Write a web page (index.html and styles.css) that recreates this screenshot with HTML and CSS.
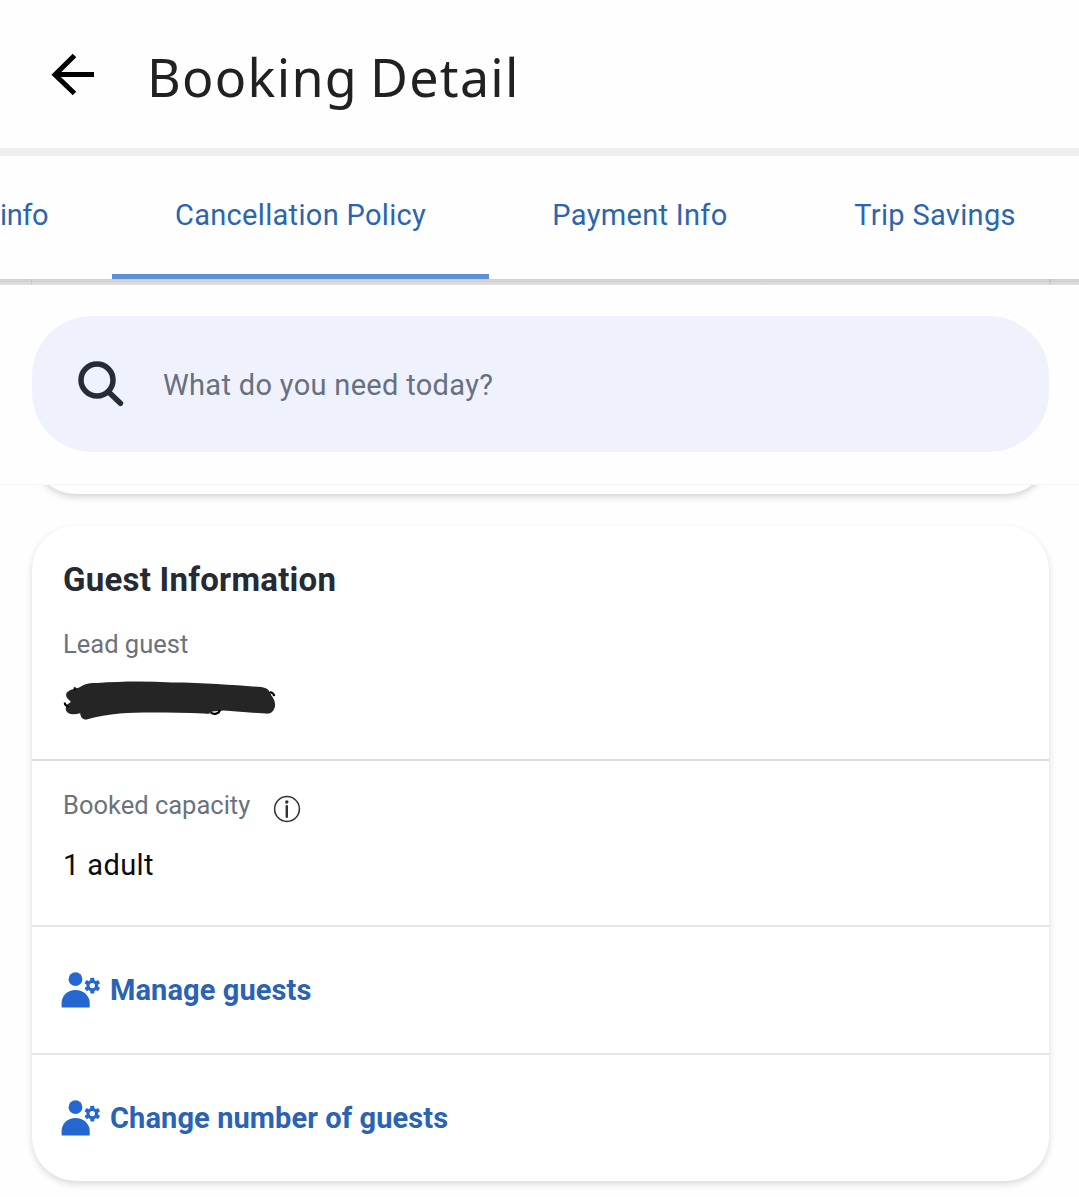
FILE: index.html
```html
<!DOCTYPE html>
<html lang="en">
<head>
<meta charset="utf-8">
<title>Booking Detail</title>
<link rel="stylesheet" href="styles.css">
</head>
<body>
<svg width="0" height="0" class="defs">
  <symbol id="manage" viewBox="0 0 40 36">
    <circle cx="14.5" cy="7.2" r="6.9"/>
    <path d="M.6 35.4V31C.6 23.800 6.500 18 14.500 18S28.700 23.800 28.700 31v4.400z"/>
    <g transform="translate(31.300 13.600)">
      <circle r="4.300" fill="none" stroke="currentColor" stroke-width="3.200"/>
      <rect x="-2" y="-7.900" width="4" height="3.400" rx=".8"/>
      <rect x="-2" y="-7.900" width="4" height="3.400" rx=".8" transform="rotate(60)"/>
      <rect x="-2" y="-7.900" width="4" height="3.400" rx=".8" transform="rotate(120)"/>
      <rect x="-2" y="-7.900" width="4" height="3.400" rx=".8" transform="rotate(180)"/>
      <rect x="-2" y="-7.900" width="4" height="3.400" rx=".8" transform="rotate(240)"/>
      <rect x="-2" y="-7.900" width="4" height="3.400" rx=".8" transform="rotate(300)"/>
    </g>
  </symbol>
</svg>
<header class="header">
  <svg class="back" width="44" height="44" viewBox="0 0 44 44"><path d="M43 21.500H5M23.500 2.500 4 21.800 23.500 40.500" fill="none" stroke="#000" stroke-width="5"/></svg>
  <h1 class="title">Booking Detail</h1>
</header>
<nav class="tabs">
  <a class="tab tab-first">info</a>
  <a class="tab tab-policy active">Cancellation Policy</a>
  <a class="tab tab-payment">Payment Info</a>
  <a class="tab tab-trip">Trip Savings</a>
</nav>
<div class="tab-shadow"><div class="tab-shadow-card"></div></div>
<section class="search-area">
  <div class="search">
    <svg class="lens" width="48" height="48" viewBox="0 0 48 48"><circle cx="20" cy="20" r="16"/><path d="M31.700 32 43.400 43.300"/></svg>
    <span class="placeholder">What do you need today?</span>
  </div>
</section>
<div class="peek"><div class="peek-card"></div></div>
<main class="card">
  <section class="lead">
    <h2 class="heading">Guest Information</h2>
    <div class="label">Lead guest</div>
    <svg class="scribble" width="212" height="44" viewBox="0 0 216 44" preserveAspectRatio="none">
      <path d="M18 7C22 4.500 27 4 34 4 60 2 85 2 110 3.500 145 3.500 175 6.500 201 8c6 .8 9 4 10 8 4 5 4.500 9 3.800 12-1.500 5-4 7-9.300 6.600L163 31.500l-12 1c-2 2.500-5 2.500-8 2-33-1-66-1.500-86 0-12 1-23 3-33 5.800-4 1-7-1-7.500-6-8 2-13 1-14.500-3-1-4 1-6 4-7.500 1-.5 1-1.500 0-2C1 18 1 14 5 12c4-3 9-2 13-5z" fill="#252525"/>
      <path d="M.8 23.500c0 3 2 3.800 4 3.300M11 11.500V8.300M210 13c2.500.7 4 1.800 4.200 4.200M149.500 33.500c3 2.500 8.500 1.500 9.500-2.500" fill="none" stroke="#000" stroke-width="2.200"/>
    </svg>
  </section>
  <section class="capacity">
    <div class="label-row">
      <span class="label">Booked capacity</span>
      <svg class="info" width="28" height="28" viewBox="0 0 28 28"><circle cx="14" cy="14" r="12.400" fill="none" stroke="#303030" stroke-width="1.500"/><circle cx="13.800" cy="7" r="1.700" fill="#303030"/><path d="M13.800 11.300v10.400" stroke="#303030" stroke-width="2.400" stroke-linecap="round"/></svg>
    </div>
    <div class="value">1 adult</div>
  </section>
  <a class="action manage"><svg class="person" width="40" height="36"><use href="#manage"/></svg><span>Manage guests</span></a>
  <a class="action change"><svg class="person" width="40" height="36"><use href="#manage"/></svg><span>Change number of guests</span></a>
</main>
</body>
</html>
```
FILE: styles.css
```css
* { box-sizing: border-box; }
body {
  margin: 0;
  height: 1197px;
  overflow: hidden;
  background: #fefefe;
  font-family: Roboto, "Liberation Sans", sans-serif;
}
.defs { display: block; }
.header {
  height: 156px;
  border-bottom: 8px solid #efefef;
  display: flex;
  align-items: flex-start;
  padding: 53px 0 0 51px;
}
.title {
  margin: -6px 0 0 52px;
  font: 400 52px/60px "Noto Sans", sans-serif;
  letter-spacing: 1.3px;
  word-spacing: -3px;
  color: #212121;
  white-space: nowrap;
}
.tabs { display: flex; height: 123px; }
.tab {
  flex: none;
  height: 123px;
  padding-top: 39px;
  font-size: 29px;
  line-height: 40px;
  letter-spacing: .32px;
  color: #2b65ae;
  text-align: center;
  white-space: nowrap;
}
.tab-first { width: 112px; text-align: left; letter-spacing: -.4px; }
.tab-policy { width: 377px; }
.tab-payment { width: 302px; }
.tab-trip { width: 288px; }
.active { border-bottom: 5px solid #5e90d9; }
.tab-shadow { height: 6px; padding: 0 28px 0 31px; background: linear-gradient(#cdcdcd, #e1e1e1); }
.tab-shadow-card { height: 6px; border: solid rgba(0,0,0,.06); border-width: 0 2px 0 1px; }
.search-area { height: 200px; padding: 31px 30px 0 32px; border-bottom: 1px solid #f5f5f5; }
.search {
  height: 136px;
  border-radius: 60px;
  background: #eff2fd;
  display: flex;
  align-items: center;
  padding-left: 45px;
}
.lens { fill: none; stroke: #252c38; stroke-width: 5.500; stroke-linecap: round; }
.placeholder { margin-left: 38px; padding-top: 2px; font-size: 29px; line-height: 40px; letter-spacing: .32px; color: #66707f; }
.peek { height: 41px; overflow: hidden; padding: 0 30px 0 32px; }
.peek-card { height: 100px; margin-top: -91px; border-radius: 44px; background: #fff; box-shadow: 0 3px 7px rgba(0,0,0,.17); }
.card {
  margin: 0 30px 0 32px;
  height: 655px;
  border-radius: 44px;
  background: #fff;
  box-shadow: 0 3px 7px rgba(0,0,0,.15);
}
.lead { height: 235px; padding: 34px 0 0 31px; border-bottom: 2px solid #dfdfdf; }
.heading { margin: 0; font-size: 33px; line-height: 40px; font-weight: 700; letter-spacing: .24px; color: #262a33; }
.label { font-size: 25.5px; line-height: 36px; color: #6b727b; }
.lead .label { margin-top: 26px; }
.scribble { display: block; margin: 17px 0 0 1px; overflow: visible; }
.capacity { height: 166px; padding: 26px 0 0 31px; border-bottom: 2px solid #e6e6e6; }
.label-row { display: flex; }
.info { margin: 8px 0 0 23px; }
.value { margin-top: 22px; font-size: 29px; line-height: 40px; letter-spacing: .4px; color: #0b0b0b; }
.action {
  display: flex;
  align-items: center;
  height: 128px;
  padding-left: 29px;
  font-size: 29px;
  line-height: 40px;
  font-weight: 700;
  letter-spacing: .1px;
  color: #2a63b4;
}
.manage { border-bottom: 2px solid #e6e6e6; }
.change { height: 126px; }
.person { color: #2467d1; fill: currentColor; margin-right: 9px; }
```
